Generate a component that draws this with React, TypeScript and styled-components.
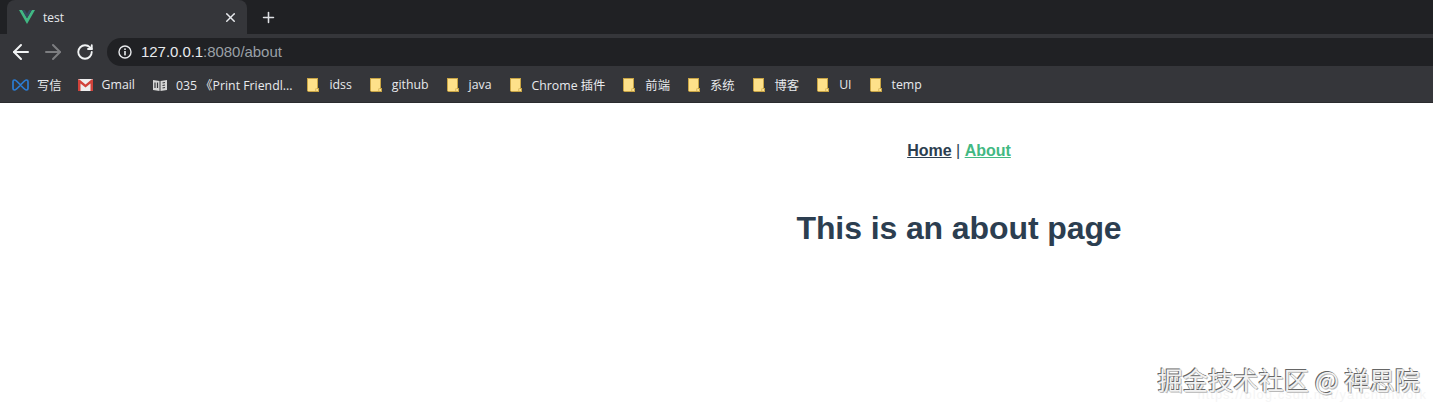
import React from "react";
import styled, { createGlobalStyle } from "styled-components";
import { ArrowLeft, ArrowRight, RotateCw, X, Plus } from "lucide-react";

const Global = createGlobalStyle`
  html, body { margin: 0; padding: 0; background: #fff; height: 409px; overflow: hidden; }
  #root { width: 1433px; height: 409px; overflow: hidden; position: relative; }
`;

const UI_FONT = `"Open Sans", "Noto Sans", "Noto Sans CJK SC", sans-serif`;

const Browser = styled.div`
  width: 1433px;
  height: 409px;
  display: flex;
  flex-direction: column;
  overflow: hidden;
  position: relative;
`;

const TabStrip = styled.div`
  height: 34px;
  background: #202124;
  display: flex;
  align-items: stretch;
  padding-left: 7px;
  flex: none;
`;

const Tab = styled.div`
  width: 240px;
  background: #35363a;
  border-radius: 8px 8px 0 0;
  display: flex;
  align-items: center;
  padding: 0 9px 0 12px;
  box-sizing: border-box;
  color: #e8eaed;
  font: 12px ${UI_FONT};
`;

const TabTitle = styled.span`
  flex: 1;
  margin-left: 8px;
  padding-top: 1px;
`;

const NewTab = styled.div`
  width: 42px;
  display: flex;
  align-items: center;
  justify-content: center;
  color: #dfe1e5;
`;

const Toolbar = styled.div`
  height: 33px;
  box-sizing: border-box;
  padding: 2px 0 0 5px;
  background: #35363a;
  display: flex;
  align-items: center;
  flex: none;
`;

const NavButton = styled.div<{ $dim?: boolean }>`
  width: 32px;
  display: flex;
  justify-content: center;
  color: ${(p) => (p.$dim ? "#7d7e81" : "#f1f3f4")};
`;

const Omnibox = styled.div`
  flex: 1;
  height: 28px;
  margin-left: 6px;
  margin-right: -40px;
  border-radius: 14px;
  background: #202124;
  display: flex;
  align-items: center;
  padding-left: 11px;
  font: 15px "Liberation Sans", Arial, sans-serif;
  letter-spacing: -0.05px;
  color: #e8eaed;
`;

const Url = styled.span`
  margin-left: 9px;
`;

const UrlRest = styled.span`
  color: #9aa0a6;
`;

const BookmarkBar = styled.div`
  height: 36px;
  background: #35363a;
  box-sizing: border-box;
  border-bottom: 1px solid #2a2b2e;
  display: flex;
  align-items: center;
  gap: 18px;
  padding-left: 12px;
  flex: none;
`;

const Bookmark = styled.div<{ $gap?: number; $after?: number }>`
  display: flex;
  align-items: center;
  gap: ${(p) => p.$gap ?? 10}px;
  margin-right: ${(p) => p.$after ?? 0}px;
  color: #e8eaed;
  font: 12.3px ${UI_FONT};
  white-space: nowrap;
`;

const Page = styled.main`
  flex: 1;
  background: #fff;
  width: 1918px;
  text-align: center;
  color: #2c3e50;
  font-family: "Liberation Sans", Arial, sans-serif;
  padding-top: 39px;
  box-sizing: border-box;
`;

const Nav = styled.nav`
  font-size: 16px;
  line-height: 18px;
`;

const NavLink = styled.a<{ $active?: boolean }>`
  font-weight: bold;
  text-decoration: underline;
  color: ${(p) => (p.$active ? "#42b983" : "#2c3e50")};
`;

const Heading = styled.h1`
  font-size: 32px;
  line-height: 37px;
  font-weight: bold;
  letter-spacing: -0.1px;
  margin: 50px 0 0;
`;

const Watermark = styled.div`
  position: absolute;
  right: 13px;
  top: 368px;
  font: 25.25px "Noto Sans CJK SC", sans-serif;
  line-height: 23px;
  white-space: nowrap;
  color: #f2f2f2;
  text-shadow: -1px -1px 0 #666, 1px 1px 0 #b8b8b8, 0 0 1px #8a8a8a;
`;

const FaintUrl = styled.div`
  position: absolute;
  right: 6px;
  top: 391px;
  font: 13px "Liberation Sans", Arial, sans-serif;
  line-height: 7px;
  letter-spacing: 1px;
  color: #f5f5f5;
  white-space: nowrap;
`;

const Folder = () => (
  <svg width="12" height="14" viewBox="0 0 12 14">
    <path d="M0 0H11V10H12V14H1.5L0 13Z" fill="#c9a545" />
    <path d="M1 1H10V10.5H8.5V13H1Z" fill="#fee18a" />
    <path d="M9.2 11H11V13H9.2Z" fill="#fde293" />
  </svg>
);

const folders = ["idss", "github", "java", "Chrome 插件", "前端", "系统", "博客", "UI", "temp"];

export default function App() {
  return (
    <Browser>
      <Global />
      <TabStrip>
        <Tab>
          <svg width="16" height="14" viewBox="0 0 16 14">
            <path d="M0 0H3.2L8 8.2L12.8 0H16L8 14Z" fill="#41b883" />
            <path d="M3.2 0H5.8L8 3.8L10.2 0H12.8L8 8.2Z" fill="#35495e" />
          </svg>
          <TabTitle>test</TabTitle>
          <X size={15} strokeWidth={2.4} color="#e8eaed" />
        </Tab>
        <NewTab>
          <Plus size={17} strokeWidth={2.2} />
        </NewTab>
      </TabStrip>
      <Toolbar>
        <NavButton><ArrowLeft size={24} strokeWidth={2} /></NavButton>
        <NavButton $dim><ArrowRight size={24} strokeWidth={2} /></NavButton>
        <NavButton><RotateCw size={18} strokeWidth={2.5} /></NavButton>
        <Omnibox>
          <svg width="14" height="14" viewBox="0 0 14 14">
            <circle cx="7" cy="7" r="6" fill="none" stroke="#e8eaed" strokeWidth="1.4" />
            <rect x="6.2" y="6" width="1.6" height="4.4" fill="#e8eaed" />
            <rect x="6.2" y="3.4" width="1.6" height="1.6" fill="#e8eaed" />
          </svg>
          <Url>127.0.0.1<UrlRest>:8080/about</UrlRest></Url>
        </Omnibox>
      </Toolbar>
      <BookmarkBar>
        <Bookmark $gap={8} $after={-2}>
          <svg width="17" height="14" viewBox="0 0 17 14">
            <path d="M2.5 2Q1 2 1 3.5V10.5Q1 12 2.5 12Q4 12 8.5 7Q13 12 14.5 12Q16 12 16 10.5V3.5Q16 2 14.5 2Q13 2 8.5 7Q4 2 2.5 2Z" fill="none" stroke="#2b7cd3" strokeWidth="1.7" />
          </svg>
          <span>写信</span>
        </Bookmark>
        <Bookmark $gap={9}>
          <svg width="15" height="12" viewBox="0 0 15 12">
            <rect width="15" height="12" rx="1" fill="#eeeeee" />
            <path d="M0 0.5H1.5L7.5 5.5L13.5 0.5H15V12H12.5V4.4L7.5 8.4L2.5 4.4V12H0Z" fill="#d1423a" />
          </svg>
          <span>Gmail</span>
        </Bookmark>
        <Bookmark $gap={9} $after={-3}>
          <svg width="14" height="12" viewBox="0 0 14 12">
            <path d="M0 1L6.5 2V12L0 11Z" fill="#d5d5d5" />
            <path d="M7.5 2L14 1V11L7.5 12Z" fill="#d5d5d5" />
            <path d="M2 3.5V9M4.5 3.5V9M9.5 4L12 3.5M9.5 6.5L12 6M9.5 9L12 8.5" stroke="#35363a" strokeWidth="1.2" />
          </svg>
          <span>035 《Print Friendl...</span>
        </Bookmark>
        {folders.map((name) => (
          <Bookmark key={name}>
            <Folder />
            <span>{name}</span>
          </Bookmark>
        ))}
      </BookmarkBar>
      <Page>
        <Nav>
          <NavLink>Home</NavLink> | <NavLink $active>About</NavLink>
        </Nav>
        <Heading>This is an about page</Heading>
      </Page>
      <FaintUrl>https://blog.csdn.net/yanchunwork</FaintUrl>
      <Watermark>掘金技术社区 @ 禅思院</Watermark>
    </Browser>
  );
}
